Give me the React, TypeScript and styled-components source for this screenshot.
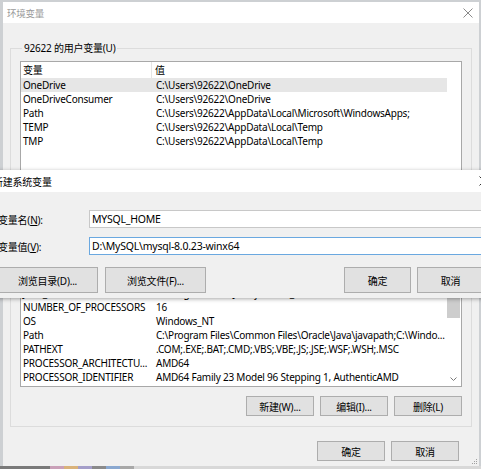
import React from "react";
import styled, { createGlobalStyle } from "styled-components";

const GlobalStyle = createGlobalStyle`
  html, body { margin: 0; padding: 0; }
  body {
    width: 481px;
    height: 469px;
    overflow: hidden;
    background: #cdd0d3;
    font-family: "Noto Sans", "Noto Sans CJK SC", sans-serif;
    font-size: 10px;
    letter-spacing: -0.22px;
    color: #000;
  }
`;

const Page = styled.div`
  position: relative;
  width: 481px;
  height: 469px;
  overflow: hidden;
  display: flex;
  flex-direction: column;
`;

const MainWindow = styled.div`
  margin: 2px 0 0 3px;
  width: 476px;
  height: 464px;
  background: #f0f0f0;
  display: flex;
  flex-direction: column;
  position: relative;
`;

const TitleBar = styled.div<{ $active?: boolean }>`
  height: ${(p) => (p.$active ? 22 : 21)}px;
  flex: none;
  background: #fff;
  display: flex;
  align-items: center;
  justify-content: space-between;
  padding: 0 ${(p) => (p.$active ? 11 : 6)}px 0 ${(p) => (p.$active ? 9 : 4)}px;
  color: ${(p) => (p.$active ? "#000" : "#9a9a9a")};
  font-size: ${(p) => (p.$active ? 10 : 9.5)}px;
`;

const Body = styled.div`
  flex: 1;
  padding: 0 7px;
  display: flex;
  flex-direction: column;
`;

const Group = styled.fieldset<{ $top: number }>`
  margin: ${(p) => p.$top}px 0 0;
  border: 1px solid #dcdcdc;
  padding: 5px 9px 10px;
  min-width: 0;
`;

const Legend = styled.legend`
  padding: 0 2px;
  margin-left: 2px;
  font-size: 10px;
  line-height: 16px;
`;

const ListBox = styled.div<{ $h: number }>`
  height: ${(p) => p.$h}px;
  border: 1px solid #a8a8a8;
  background: #fff;
  display: flex;
  overflow: hidden;
`;

const ListMain = styled.div`
  width: 426px;
  display: flex;
  flex-direction: column;
  overflow: hidden;
`;

const HeaderRow = styled.div`
  height: 16px;
  flex: none;
  display: grid;
  grid-template-columns: 131px 1fr;
  align-items: center;
  line-height: 16px;
`;

const HeaderCell = styled.div<{ $sep?: boolean }>`
  padding-left: ${(p) => (p.$sep ? 2 : 3)}px;
  border-right: ${(p) => (p.$sep ? "1px solid #e5e5e5" : "none")};
  height: 16px;
`;

const Row = styled.div<{ $sel?: boolean }>`
  height: 14px;
  flex: none;
  display: grid;
  grid-template-columns: 133px 1fr;
  line-height: 14px;
  background: ${(p) => (p.$sel ? "#e6e6e6" : "transparent")};
  white-space: nowrap;
`;

const Cell = styled.div`
  padding-left: 2px;
  overflow: hidden;
  white-space: nowrap;
`;

const ScrollCol = styled.div`
  width: 13px;
  flex: none;
  display: flex;
  flex-direction: column;
  align-items: stretch;
`;

const ScrollArrow = styled.div`
  height: 14px;
  flex: none;
  display: flex;
  align-items: center;
  justify-content: center;
`;

const ScrollTrack = styled.div`
  flex: 1;
  display: flex;
  flex-direction: column;
`;

const Thumb = styled.div<{ $top: number; $h: number }>`
  margin-top: ${(p) => p.$top}px;
  height: ${(p) => p.$h}px;
  background: #cdcdcd;
`;

const ButtonRow = styled.div<{ $mt: number; $pr?: number }>`
  display: flex;
  justify-content: flex-end;
  gap: 6px;
  margin-top: ${(p) => p.$mt}px;
  padding-right: ${(p) => p.$pr ?? 0}px;
`;

const Button = styled.button<{ $w?: number; $h?: number }>`
  width: ${(p) => p.$w ?? 68}px;
  height: ${(p) => p.$h ?? 20}px;
  padding: 0;
  border: 1px solid #adadad;
  background: #e1e1e1;
  font-family: inherit;
  font-size: 10px;
  letter-spacing: inherit;
  color: #000;
  flex: none;
`;

const Grip = styled.svg`
  position: absolute;
  right: 1px;
  bottom: 1px;
`;

const Strip = styled.svg`
  flex: none;
  display: block;
`;

/* Overlay dialog: a second window lying over the first one */
const Dialog = styled.div`
  position: absolute;
  left: -16px;
  top: 170px;
  width: 516px;
  height: 128px;
  background: #f0f0f0;
  box-shadow: 0 1px 4px rgba(0, 0, 0, 0.35);
  display: flex;
  flex-direction: column;
`;

const DialogBody = styled.div`
  flex: 1;
  padding: 18px 16px 0 13px;
  display: flex;
  flex-direction: column;
`;

const FieldRow = styled.div<{ $mt?: number }>`
  display: flex;
  align-items: center;
  margin-top: ${(p) => p.$mt ?? 0}px;
`;

const FieldLabel = styled.div`
  width: 92px;
  padding-left: 1px;
  box-sizing: border-box;
  flex: none;
  font-size: 10px;
`;

const Input = styled.div<{ $focus?: boolean }>`
  flex: 1;
  height: 18px;
  box-sizing: border-box;
  border: 1px solid ${(p) => (p.$focus ? "#6aa8e0" : "#c8c8c8")};
  background: #fff;
  padding-left: 2px;
  line-height: 16px;
  font-size: 10.5px;
  white-space: nowrap;
`;

const DialogButtons = styled.div`
  display: flex;
  gap: 7px;
  margin-top: 12px;
`;

const Spacer = styled.div`
  flex: 1;
`;

const U = styled.span`
  text-decoration: underline;
`;

const CloseIcon = ({ color }: { color: string }) => (
  <svg width="10" height="10" viewBox="0 0 10 10">
    <path d="M0.5 0.5 L9.5 9.5 M9.5 0.5 L0.5 9.5" stroke={color} strokeWidth="1" />
  </svg>
);

const userVars: [string, string][] = [
  ["OneDrive", "C:\\Users\\92622\\OneDrive"],
  ["OneDriveConsumer", "C:\\Users\\92622\\OneDrive"],
  ["Path", "C:\\Users\\92622\\AppData\\Local\\Microsoft\\WindowsApps;"],
  ["TEMP", "C:\\Users\\92622\\AppData\\Local\\Temp"],
  ["TMP", "C:\\Users\\92622\\AppData\\Local\\Temp"],
];

const sysVars: [string, string][] = [
  ["ComSpec", "C:\\Windows\\system32\\cmd.exe"],
  ["DriverData", "C:\\Windows\\System32\\Drivers\\DriverData"],
  ["JAVA_HOME", "C:\\Program Files\\Java\\jdk1.8.0_271"],
  ["NUMBER_OF_PROCESSORS", "16"],
  ["OS", "Windows_NT"],
  ["Path", "C:\\Program Files\\Common Files\\Oracle\\Java\\javapath;C:\\Windo..."],
  ["PATHEXT", ".COM;.EXE;.BAT;.CMD;.VBS;.VBE;.JS;.JSE;.WSF;.WSH;.MSC"],
  ["PROCESSOR_ARCHITECTU...", "AMD64"],
  ["PROCESSOR_IDENTIFIER", "AMD64 Family 23 Model 96 Stepping 1, AuthenticAMD"],
];

export default function App() {
  return (
    <Page>
      <GlobalStyle />
      <MainWindow>
        <TitleBar>
          <span>环境变量</span>
          <CloseIcon color="#8a8a8a" />
        </TitleBar>
        <Body>
          <Group $top={17}>
            <Legend>92622 的用户变量(U)</Legend>
            <ListBox $h={113}>
              <ListMain>
                <HeaderRow>
                  <HeaderCell $sep>变量</HeaderCell>
                  <HeaderCell>值</HeaderCell>
                </HeaderRow>
                {userVars.map(([k, v], i) => (
                  <Row key={k} $sel={i === 0}>
                    <Cell>{k}</Cell>
                    <Cell>{v}</Cell>
                  </Row>
                ))}
              </ListMain>
              <ScrollCol />
            </ListBox>
            <ButtonRow $mt={9}>
              <Button>新建(N)...</Button>
              <Button>编辑(E)...</Button>
              <Button>删除(D)</Button>
            </ButtonRow>
          </Group>
          <Group $top={4}>
            <Legend>系统变量(S)</Legend>
            <ListBox $h={144}>
              <ListMain>
                <HeaderRow>
                  <HeaderCell $sep>变量</HeaderCell>
                  <HeaderCell>值</HeaderCell>
                </HeaderRow>
                {sysVars.map(([k, v]) => (
                  <Row key={k}>
                    <Cell>{k}</Cell>
                    <Cell>{v}</Cell>
                  </Row>
                ))}
              </ListMain>
              <ScrollCol>
                <ScrollArrow />
                <ScrollTrack>
                  <Thumb $top={2} $h={60} />
                </ScrollTrack>
                <ScrollArrow>
                  <svg width="7" height="4" viewBox="0 0 7 4">
                    <path d="M0.5 0.5 L3.5 3.5 L6.5 0.5" stroke="#7a7a7a" fill="none" strokeWidth="1" />
                  </svg>
                </ScrollArrow>
              </ScrollCol>
            </ListBox>
            <ButtonRow $mt={9}>
              <Button>新建(W)...</Button>
              <Button>编辑(I)...</Button>
              <Button>删除(L)</Button>
            </ButtonRow>
          </Group>
          <ButtonRow $mt={14} $pr={13}>
            <Button>确定</Button>
            <Button>取消</Button>
          </ButtonRow>
        </Body>
        <Grip width="6" height="6" viewBox="0 0 6 6">
          <rect x="4" y="0" width="1" height="1" fill="#a0a0a0" />
          <rect x="2" y="2" width="1" height="1" fill="#a0a0a0" />
          <rect x="4" y="2" width="1" height="1" fill="#a0a0a0" />
          <rect x="0" y="4" width="1" height="1" fill="#a0a0a0" />
          <rect x="2" y="4" width="1" height="1" fill="#a0a0a0" />
          <rect x="4" y="4" width="1" height="1" fill="#a0a0a0" />
        </Grip>
      </MainWindow>
      <Strip width="481" height="3" viewBox="0 0 481 3">
        <rect x="0" y="0" width="481" height="3" fill="#d8d8d8" />
        <rect x="0" y="0" width="50" height="3" fill="#7a7a7a" />
        <rect x="50" y="0" width="14" height="3" fill="#c9a0b8" />
        <rect x="64" y="0" width="14" height="3" fill="#d9b27a" />
        <rect x="78" y="0" width="14" height="3" fill="#a49ec9" />
        <rect x="92" y="0" width="14" height="3" fill="#8a8a8a" />
        <rect x="106" y="0" width="14" height="3" fill="#8aa8d0" />
        <rect x="120" y="0" width="14" height="3" fill="#a8a8a8" />
      </Strip>

      <Dialog>
        <TitleBar $active>
          <span>新建系统变量</span>
          <CloseIcon color="#333" />
        </TitleBar>
        <DialogBody>
          <FieldRow>
            <FieldLabel>
              变量名(<U>N</U>):
            </FieldLabel>
            <Input>MYSQL_HOME</Input>
          </FieldRow>
          <FieldRow $mt={9}>
            <FieldLabel>
              变量值(<U>V</U>):
            </FieldLabel>
            <Input $focus>D:\MySQL\mysql-8.0.23-winx64</Input>
          </FieldRow>
          <DialogButtons>
            <Button $w={101} $h={26}>浏览目录(D)...</Button>
            <Button $w={101} $h={26}>浏览文件(F)...</Button>
            <Spacer />
            <Button $w={67} $h={26}>确定</Button>
            <Button $w={67} $h={26} style={{ marginLeft: -1 }}>取消</Button>
          </DialogButtons>
        </DialogBody>
      </Dialog>
    </Page>
  );
}
